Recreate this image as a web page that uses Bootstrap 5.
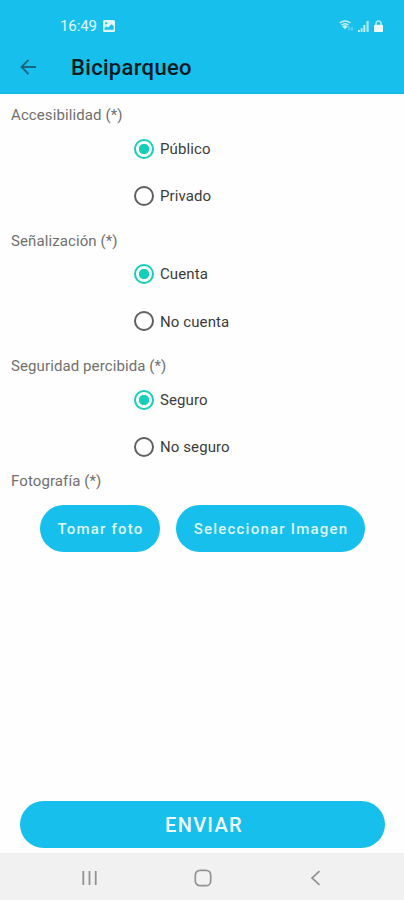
<!DOCTYPE html>
<html lang="es">
<head>
<meta charset="utf-8">
<meta name="viewport" content="width=device-width, initial-scale=1">
<title>Biciparqueo</title>
<link href="https://cdn.jsdelivr.net/npm/bootstrap@5.3.0/dist/css/bootstrap.min.css" rel="stylesheet">
<style>
  body { font-family: Roboto, "Liberation Sans", sans-serif; background: #fefefe; height: 900px; overflow: hidden; }
  svg { display: block; flex: none; }
  .top-area { background: #17bfec; height: 94px; box-shadow: inset 0 -1px 0 #18b5dd; }
  .status-line { height: 50px; padding: 1px 21px 0 60px; color: #e0f8ff; font-size: 15px; }
  .status-line .clock { letter-spacing: -.1px; padding-top: 2px; margin-right: 2px; }
  .title-line { height: 34px; padding-left: 17px; }
  .title-line svg { margin-top: -1px; }
  .title-line h1 { font-size: 22px; font-weight: 500; letter-spacing: .32px; color: #051a20; margin-left: 31px; line-height: 34px; padding-top: 1px; }
  .field-group { padding-top: 11px; height: 125.5px; }
  .field-label { font-size: 15px; line-height: 20px; color: #707070; padding-left: 11px; letter-spacing: .1px; }
  .choice { height: 47.3px; padding-left: 134px; gap: 6px; }
  .choice .form-check-input { width: 20px; height: 20px; margin: 0; float: none; border: 2px solid #606060; background: #fefefe; box-shadow: none; }
  .choice .form-check-input:checked { border-color: #14d0ba; background: radial-gradient(circle, #14d0ba 4.8px, #fefefe 5.5px); }
  .choice label { font-size: 15px; color: #3c3c3c; letter-spacing: .1px; padding-top: 1px; }
  .pill { background: #17bfec; color: #dcf7ff; border: 0; border-radius: 24px; height: 47px; padding: 0; font-weight: 500; }
  .pill:hover { background: #12b3de; color: #fff; }
  .photo-row { padding: 14.6px 39px 0 40px; gap: 16px; }
  .photo-row .pill { font-size: 15px; letter-spacing: 1.22px; padding-left: 1px; padding-top: 1px; }
  .take { width: 120px; }
  .send-row { padding: 0 19px 5px 20px; }
  .send-row .pill { font-size: 20px; letter-spacing: 1.3px; color: #f4fcff; height: 47px; padding-left: 3px; }
  .system-nav { height: 47px; background: #f1f1f1; padding: 2px 80px 0 81px; }
</style>
<script src="https://cdn.jsdelivr.net/npm/bootstrap@5.3.0/dist/js/bootstrap.bundle.min.js"></script>
</head>
<body class="d-flex flex-column">
<header class="top-area flex-shrink-0">
  <div class="status-line d-flex align-items-center">
    <span class="clock">16:49</span>
    <svg class="ms-1" width="12" height="12" viewBox="0 0 13 12" preserveAspectRatio="none"><path fill="#e0f8ff" fill-rule="evenodd" d="M1.500 0h10Q13 0 13 1.500v9Q13 12 11.500 12h-10Q0 12 0 10.500v-9Q0 0 1.500 0zM1.700 9.800h9.800V6L9 4.200 5.500 7.700 3.700 6.200 1.700 8zM2.500 2.200v2h2v-2z"/></svg>
    <div class="d-flex align-items-center ms-auto">
      <svg width="15" height="13" viewBox="0 0 15 13" fill="none" stroke="#c9f1fb"><path d="M.7 4Q6 .1 11.500 4M2.500 6Q6 3.300 9.500 6" stroke-width="1.500"/><path d="M3.200 7.200Q6 5.200 8.800 7.200L6 10.200z" fill="#c9f1fb" stroke="none"/><path d="M10 11.500V7.500M8.700 8.800 10 7.500M13 7.500v4M11.700 10.200l1.300 1.300" stroke-width=".9" opacity=".6"/></svg>
      <svg class="ms-1" width="12" height="12" viewBox="0 0 12 12" fill="#c9f1fb"><path d="M0 10h1.800v2H0zM2.700 8h1.800v4H2.700zM5.400 5h1.900v7H5.400z"/><path d="M8.500 1H10.700v11h-2.200z" opacity=".85"/></svg>
      <svg class="ms-1" width="9" height="12" viewBox="0 0 9 12"><path d="M2 6V3.500a2.500 2.500 0 0 1 5 0V6" fill="none" stroke="#a9eafa" stroke-width="1.500"/><rect y="4.800" width="9" height="7.200" rx=".8" fill="#effcff"/></svg>
    </div>
  </div>
  <div class="title-line d-flex align-items-center">
    <svg width="23" height="20" viewBox="0 0 23 20" fill="none" stroke="#17667c" stroke-width="1.800"><path d="M19 10H5M11.500 2.800 4.500 10l7 7.200"/></svg>
    <h1 class="mb-0">Biciparqueo</h1>
  </div>
</header>
<main class="flex-grow-1 d-flex flex-column">
  <div class="field-group" role="radiogroup" aria-labelledby="l1">
    <div class="field-label" id="l1">Accesibilidad (*)</div>
    <div class="choice d-flex align-items-center"><input class="form-check-input" type="radio" name="acceso" id="publico" checked><label for="publico">Público</label></div>
    <div class="choice d-flex align-items-center"><input class="form-check-input" type="radio" name="acceso" id="privado"><label for="privado">Privado</label></div>
  </div>
  <div class="field-group" role="radiogroup" aria-labelledby="l2">
    <div class="field-label" id="l2">Señalización (*)</div>
    <div class="choice d-flex align-items-center"><input class="form-check-input" type="radio" name="senal" id="cuenta" checked><label for="cuenta">Cuenta</label></div>
    <div class="choice d-flex align-items-center"><input class="form-check-input" type="radio" name="senal" id="nocuenta"><label for="nocuenta">No cuenta</label></div>
  </div>
  <div class="field-group" role="radiogroup" aria-labelledby="l3">
    <div class="field-label" id="l3">Seguridad percibida (*)</div>
    <div class="choice d-flex align-items-center"><input class="form-check-input" type="radio" name="seguridad" id="seguro" checked><label for="seguro">Seguro</label></div>
    <div class="choice d-flex align-items-center"><input class="form-check-input" type="radio" name="seguridad" id="noseguro"><label for="noseguro">No seguro</label></div>
  </div>
  <div class="field-label">Fotografía (*)</div>
  <div class="photo-row d-flex">
    <button class="btn pill take" type="button">Tomar foto</button>
    <button class="btn pill flex-grow-1" type="button">Seleccionar Imagen</button>
  </div>
  <div class="send-row mt-auto"><button class="btn pill w-100" type="submit">ENVIAR</button></div>
</main>
<nav class="system-nav flex-shrink-0 d-flex align-items-center justify-content-between" aria-label="Sistema">
  <svg width="17" height="16" viewBox="0 0 17 16" stroke="#929292" stroke-width="1.800"><path d="M2.300 1v14M8.500 1v14M14.700 1v14"/></svg>
  <svg width="18" height="18" viewBox="0 0 18 18" fill="none" stroke="#929292" stroke-width="1.700"><rect x="1.300" y="1.300" width="15.400" height="15.400" rx="4.800"/></svg>
  <svg width="16" height="16" viewBox="0 0 16 16" fill="none" stroke="#929292" stroke-width="1.700"><path d="M11.500 1.200 4 8l7.500 6.800"/></svg>
</nav>
</body>
</html>
